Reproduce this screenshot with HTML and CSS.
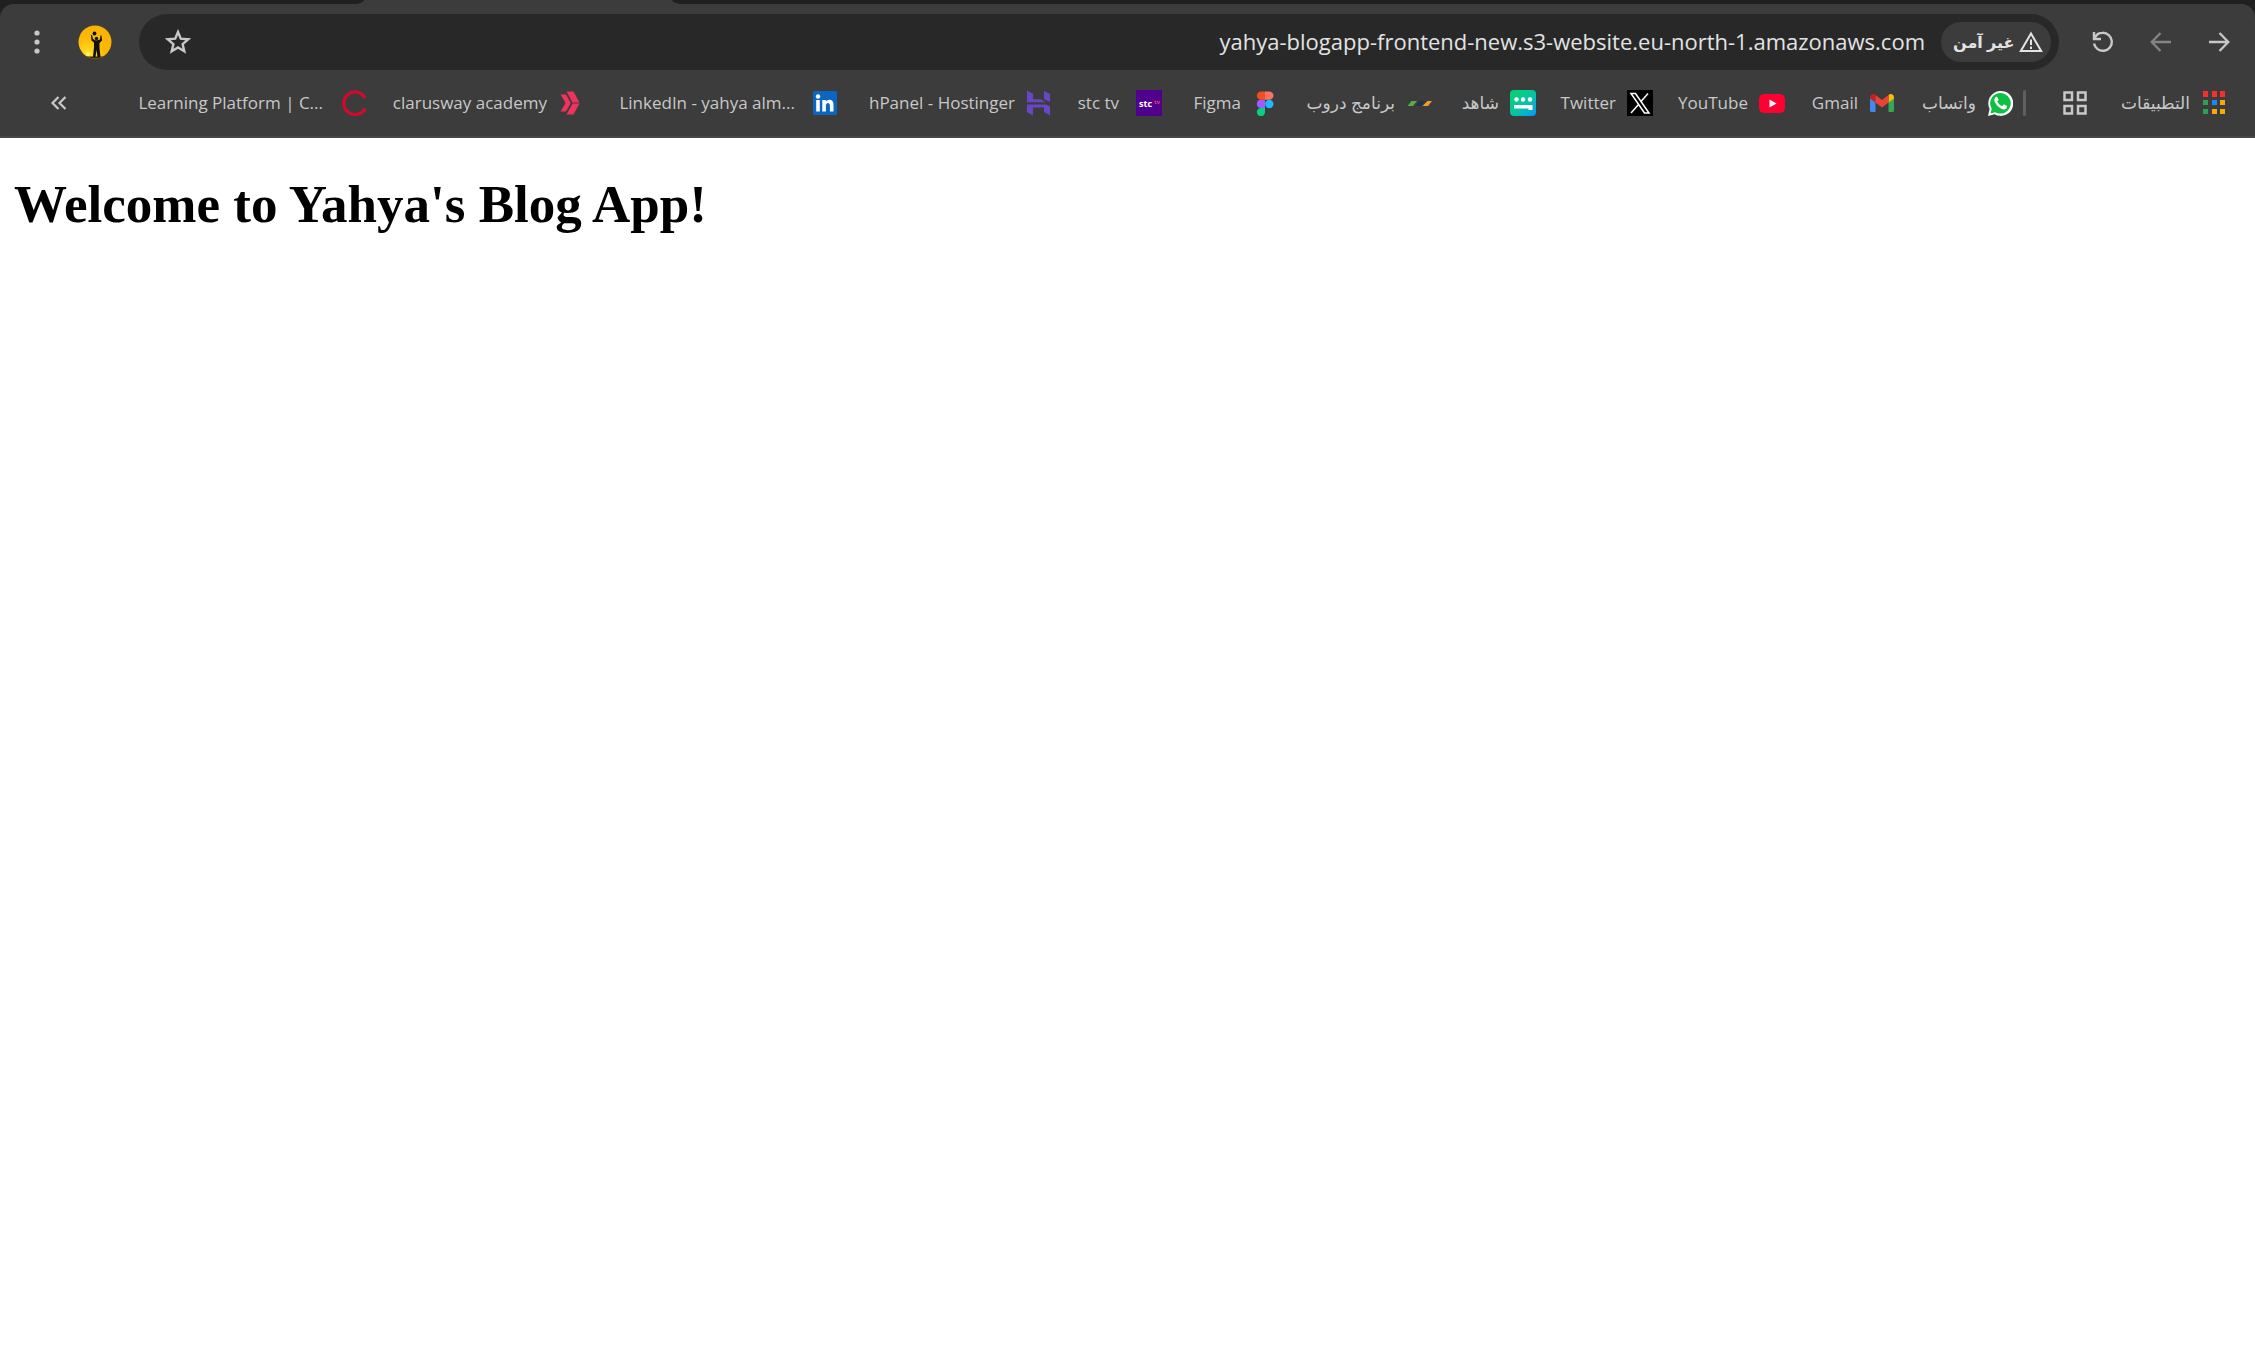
FILE: index.html
```html
<!DOCTYPE html>
<html lang="en">
<head>
<meta charset="utf-8">
<title>Blog App</title>
<link rel="stylesheet" href="styles.css">
</head>
<body>
<header class="browser" dir="rtl" lang="ar">
  <div class="tabstrip" dir="ltr"><span class="strip strip-start"></span><span class="strip strip-end"></span></div>
  <div class="chrome">
    <div class="toolbar">
      <button class="tool" type="button" aria-label="Forward"><svg width="24" height="24" viewBox="0 0 24 24" fill="none" stroke="#c8c8c8" stroke-width="2.3"><path d="M2 12H21M12.500 3L21.300 12L12.500 21"/></svg></button>
      <button class="tool" type="button" aria-label="Back" disabled><svg width="24" height="24" viewBox="0 0 24 24" fill="none" stroke="#858585" stroke-width="2.300"><path d="M22 12H3M11.500 3L2.700 12L11.500 21"/></svg></button>
      <button class="tool" type="button" aria-label="Reload"><svg width="24" height="24" viewBox="0 0 24 24" fill="none" stroke="#c8c8c8" stroke-width="2.400"><path d="M3 2V9H10M3.500 8.500C5 5 8 2.800 11.500 2.800A9 9 0 1 1 3 13.500"/></svg></button>
      <div class="omnibox">
        <button class="chip" type="button"><svg width="24" height="22" viewBox="0 0 24 22" fill="none" stroke="#e3e3e3" stroke-width="2"><path d="M12 2.500L22.200 20H1.800ZM12 8.500V14M12 15.500V18"/></svg><span>غير آمن</span></button>
        <input class="url" type="text" dir="ltr" aria-label="Address" value="yahya-blogapp-frontend-new.s3-website.eu-north-1.amazonaws.com">
        <button class="star" type="button" aria-label="Bookmark"><svg width="26" height="26" viewBox="0 0 26 26" fill="none" stroke="#c8c8c8" stroke-width="2.400"><path d="M13 3L15.800 9.700L23.200 10.300L17.600 15.100L19.300 22.300L13 18.500L6.700 22.300L8.400 15.100L2.800 10.300L10.200 9.700Z"/></svg></button>
      </div>
      <button class="tool" type="button" aria-label="Profile"><svg width="34" height="34" viewBox="0 0 34 34"><defs><clipPath id="round"><circle cx="17" cy="17" r="16.500"/></clipPath><radialGradient id="sun" cx=".3" cy=".86" r=".9"><stop offset="0" stop-color="#fff9a0"/><stop offset=".1" stop-color="#ffdc20"/><stop offset=".5" stop-color="#fdba06"/><stop offset="1" stop-color="#f8b008"/></radialGradient></defs><g clip-path="url(#round)"><rect width="34" height="34" fill="url(#sun)"/><path d="M0 31.500H34V34H0Z" fill="#3a2400"/><circle cx="16.500" cy="8.500" r="1.900" fill="#111"/><circle cx="18.500" cy="13.500" r="1.700" fill="#111"/><path d="M13 10L14 10L15 14L18 15.500L22 14.500L22.500 10.500L23.500 10.500L24 15.500L21.500 18L21.500 23L22.500 32H19.500L18.500 25L17.500 32H15L16 22V17.500L13.500 15.500Z" fill="#111"/></g></svg></button>
      <button class="tool" type="button" aria-label="Menu"><svg width="24" height="24" viewBox="0 0 24 24" fill="#c8c8c8"><circle cx="12" cy="3" r="2.600"/><circle cx="12" cy="12" r="2.600"/><circle cx="12" cy="21" r="2.600"/></svg></button>
    </div>
    <nav class="bookmarks">
      <a class="mark" href="#"><svg class="ico" viewBox="0 0 26 26"><path fill="#f7302f" d="M2 1h5v6H2zM11 1h5v6h-5zM19 1h5v6h-5z"/><path fill="#2fa052" d="M2 10h5v5H2zM2 19h5v5H2z"/><path fill="#1c88f5" d="M11 10h5v5h-5z"/><path fill="#f8a807" d="M19 10h5v5h-5zM11 19h5v5h-5zM19 19h5v5h-5z"/></svg><span>التطبيقات</span></a>
      <button class="groups" type="button" aria-label="Tab groups"><svg class="ico" viewBox="0 0 26 26" fill="none" stroke="#c8c8c8" stroke-width="2.500"><path d="M2.500 2.500h7.500v7.500H2.500zM16 2.500h7.500v7.500H16zM2.500 16h7.500v7.500H2.500zM16 16h7.500v7.500H16z"/></svg></button>
      <span class="divider"></span>
      <a class="mark" href="#"><svg class="ico" viewBox="0 0 26 26"><path fill="#fff" d="M1 26L2.600 19A12.500 12.500 0 1 1 7.500 24.200Z"/><path fill="#0dbf42" d="M3.500 23.500L4.700 18.800A10.300 10.300 0 1 1 8.200 22.200Z"/><path fill="#fff" d="M9.300 6.800C7.200 8 6.700 10.200 8 12.600C10 16.200 13 18.900 16.500 19.500C18.800 19.600 20 18.200 20 15.900L16.800 14.300L15.300 16.100C13 15.300 11.200 13.500 10.200 11.400L11.600 9.900L10.300 6.900Z"/></svg><span>واتساب</span></a>
      <a class="mark" href="#"><svg class="ico" viewBox="0 0 26 26"><path fill="#4285f4" d="M1 7V20.500Q1 22 2.500 22H6.500V11Z"/><path fill="#34a853" d="M19.500 11V22H23.500Q25 22 25 20.500V7Z"/><path fill="#c5221f" d="M1 7.500C1 4 4.500 3 6.500 5V12.500L1 8.500Z"/><path fill="#fbbc04" d="M25 7.500C25 4 21.500 3 19.500 5V12.500L25 8.500Z"/><path fill="#ea4335" d="M6.500 5L13 10L19.500 5V12.500L13 17.500L6.500 12.500Z"/></svg><span>Gmail</span></a>
      <a class="mark" href="#"><svg class="ico" viewBox="0 0 26 26"><rect y="4" width="26" height="19" rx="5" fill="#ff0033"/><path fill="#fff" d="M10.500 9.500L17.500 13.500L10.500 17.500Z"/></svg><span>YouTube</span></a>
      <a class="mark" href="#"><svg class="ico" viewBox="0 0 26 26"><rect width="26" height="26" fill="#000"/><path fill="none" stroke="#fff" stroke-width="1.500" d="M4 3.500H8.500L22 23H17.500ZM21 3.500L14 11.500M11.500 14.500L4 23"/></svg><span>Twitter</span></a>
      <a class="mark" href="#"><svg class="ico" viewBox="0 0 26 26"><defs><linearGradient id="teal" x1="0" y1="0" x2="1" y2="1"><stop offset=".2" stop-color="#06cf7b"/><stop offset=".6" stop-color="#06c2ad"/><stop offset="1" stop-color="#0695ff"/></linearGradient></defs><rect width="26" height="26" rx="4" fill="url(#teal)"/><g fill="#fff"><circle cx="6.500" cy="9.500" r="2.200"/><circle cx="13" cy="9.500" r="2.200"/><circle cx="20" cy="9.500" r="2.200"/><path d="M4 15H22.500V20H18.500V18.500H4Z"/></g></svg><span>شاهد</span></a>
      <a class="mark" href="#"><svg class="ico" viewBox="0 0 26 26"><path fill="#56ad40" d="M5.500 11H11L7 16H1.500Z"/><path fill="#1c3550" d="M13.500 11H19L15 16H9.500Z"/><path fill="#f79a1e" d="M21.500 11H26L22 16H16.500Z"/></svg><span>برنامج دروب</span></a>
      <a class="mark" href="#"><svg class="ico" viewBox="0 0 26 26"><path fill="#f24e1e" d="M13 1.500H9A4 4 0 0 0 9 9.800H13Z"/><path fill="#ff7262" d="M13 1.500H17.300A4 4 0 0 1 17.300 9.800H13Z"/><path fill="#a259ff" d="M13 9.800H9A4 4 0 0 0 9 18H13Z"/><circle cx="17.300" cy="14" r="4.200" fill="#1abcfe"/><path fill="#0acf83" d="M13 18H9A4.100 4.100 0 1 0 13 22Z"/></svg><span>Figma</span></a>
      <a class="mark wide" href="#"><svg class="ico" direction="ltr" viewBox="0 0 26 26"><rect width="26" height="26" fill="#4f008c"/><text class="logo-text" x="3" y="17" fill="#fff">stc</text><text class="logo-small" x="18" y="14" fill="#ff375e">tv</text></svg><span>stc tv</span></a>
      <a class="mark" href="#"><svg class="ico" viewBox="0 0 26 26" fill="#6747c7"><path d="M1 .5L7 3.700V9.300H14.500L20 12.300H1ZM18 1L24 4V12L18 9ZM1 14.500H20.500L24 16.500V25.500L18 22V17.500H7V25.500L1 22.300Z"/></svg><span>hPanel - Hostinger</span></a>
      <a class="mark wide" href="#"><svg class="ico" viewBox="0 0 26 26"><rect x="1" y="1" width="24" height="24" rx="2" fill="#0a66c2"/><g fill="#fff"><circle cx="6" cy="6.500" r="2.200"/><path d="M4.200 10H7.800V21.500H4.200ZM10.300 10H13.800V11.700C15.500 9 21.500 8.700 21.500 14.700V21.500H17.900V15.500C17.900 12 13.900 12.200 13.900 15.500V21.500H10.300Z"/></g></svg><span dir="ltr">LinkedIn - yahya alm...</span></a>
      <a class="mark" href="#"><svg class="ico" viewBox="0 0 26 26" fill="#f0325c"><path d="M2.500 4.500H8L12.800 13L8 21.500H2.500L7.500 13.300H6.500V12.700H7.500ZM8.500 1.500H15.500L21.500 12.600H14.500ZM8.500 24.500H15.500L21.500 13.500H14.500Z"/></svg><span>clarusway academy</span></a>
      <a class="mark wide" href="#"><svg class="ico" viewBox="0 0 26 26" fill="none" stroke="#cf0a2c" stroke-width="3.200" stroke-linecap="round"><path d="M24.500 7A11.300 11.300 0 1 0 24.500 19.500"/></svg><span dir="ltr">Learning Platform | C...</span></a>
      <button class="more" type="button" aria-label="More bookmarks"><svg width="18" height="14" viewBox="0 0 18 14" fill="none" stroke="#c8c8c8" stroke-width="2.200"><path d="M8.500 1L2.500 7L8.500 13M15.500 1L9.500 7L15.500 13"/></svg></button>
    </nav>
  </div>
</header>
<main class="page">
  <h1>Welcome to Yahya's Blog App!</h1>
</main>
</body>
</html>
```

FILE: styles.css
```css
* { box-sizing: border-box; }
body { margin: 0; background: #fff; }
svg { display: block; flex: none; }
button { border: 0; padding: 0; background: none; color: inherit; font: inherit; }

.browser {
  background: #1f2120;
  color: #c8c8c8;
  font-family: "Open Sans", "DejaVu Sans", sans-serif;
}
.tabstrip {
  display: flex;
  gap: 308px;
  height: 4px;
  background: #3c3c3c;
}
.strip { background: #1f2120; }
.strip-start { width: 364px; border-bottom-right-radius: 10px 4px; }
.strip-end { flex: 1; border-bottom-left-radius: 10px 4px; }

.chrome {
  background: #3c3c3c;
  border-radius: 14px 14px 0 0;
  border-bottom: 2px solid #474747;
}
.toolbar {
  display: flex;
  align-items: center;
  gap: 18px;
  padding: 10px 16px 0 17px;
}
.tool {
  display: flex;
  align-items: center;
  justify-content: center;
  width: 40px;
  height: 40px;
}
.omnibox {
  display: flex;
  align-items: center;
  flex: 1;
  gap: 16px;
  height: 56px;
  margin: 0 6px;
  padding: 0 8px 0 26px;
  border-radius: 28px;
  background: #282828;
}
.chip {
  display: flex;
  align-items: center;
  justify-content: space-between;
  width: 110px;
  height: 40px;
  padding: 0 8px 0 12px;
  border-radius: 20px;
  background: #3c3c3c;
  color: #e3e3e3;
  font-size: 16px;
  font-weight: 600;
  white-space: nowrap;
}
.url {
  flex: 1;
  min-width: 0;
  border: 0;
  padding: 0 0 2px;
  background: none;
  color: #e3e3e3;
  font-family: inherit;
  font-size: 22px;
  text-align: right;
}

.bookmarks {
  display: grid;
  grid-template-columns: 139px 62px 13px 118px 110px 132px 117px 104px 154px 116px 110px 214px 254px 218px auto 1fr;
  align-items: center;
  height: 66px;
  padding: 0 28px 0 50px;
  font-size: 17px;
  line-height: 26px;
}
.mark {
  display: flex;
  align-items: center;
  gap: 11px;
  color: inherit;
  text-decoration: none;
  white-space: nowrap;
}
.wide { gap: 17px; }
.ico { width: 26px; height: 26px; }
.divider {
  width: 3px;
  height: 26px;
  border-radius: 2px;
  background: #5f5f5f;
}
.logo-text { font-size: 9px; font-weight: 700; }
.logo-small { font-size: 6px; font-weight: 700; }
.more { justify-self: end; }

.page { padding: 0 14px; }
h1 {
  margin: 36px 0;
  font: bold 53px/60px "Liberation Serif", serif;
}
```
